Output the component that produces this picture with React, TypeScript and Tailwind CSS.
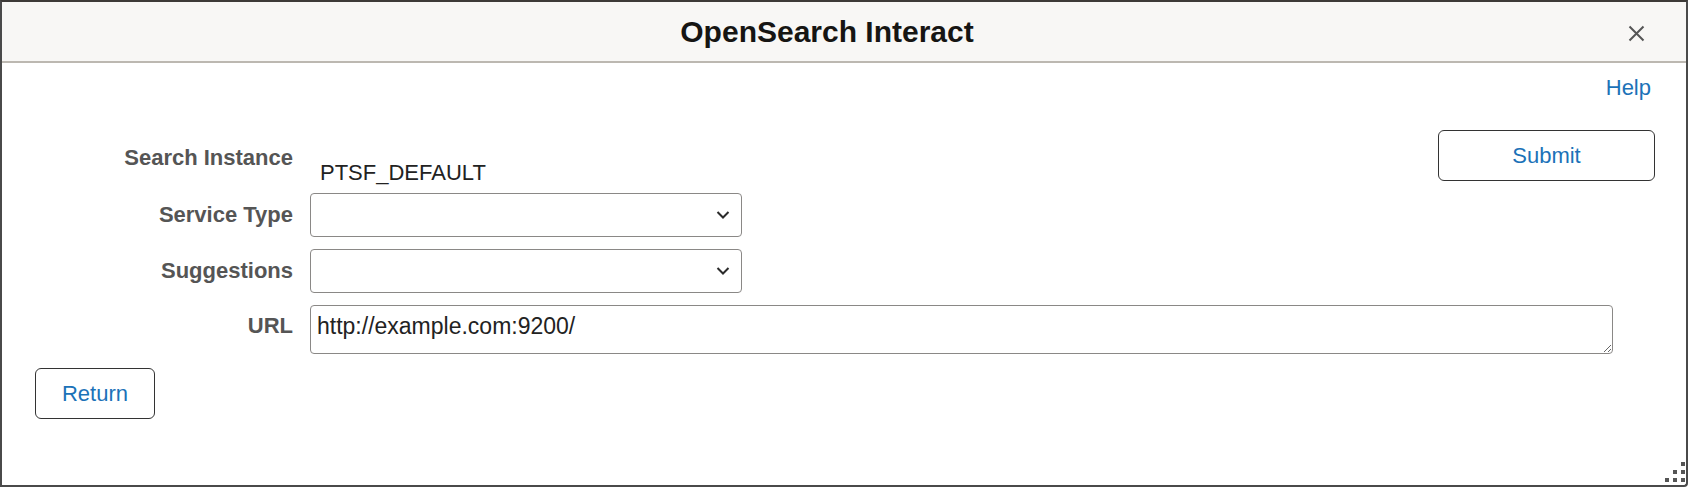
import React from 'react';

const Chevron = () => (
  <svg width="14" height="9" viewBox="0 0 14 9" className="pointer-events-none absolute right-[11px] top-1/2 -translate-y-1/2">
    <path d="M1.5 1.5 L7 7 L12.5 1.5" fill="none" stroke="#2b2b2b" strokeWidth="2" />
  </svg>
);

const SelectBox = () => (
  <div className="relative h-[44px] w-[432px] rounded-[4px] border border-[#8a8886] bg-white">
    <Chevron />
  </div>
);

const App = () => {
  const font = { fontFamily: '"Liberation Sans", Arial, sans-serif' };

  return (
    <div className="h-[487px] w-[1688px] bg-white" style={font}>
      <div className="relative flex h-[487px] flex-col overflow-hidden rounded-br-[4px] border-t-2 border-r-2 border-b-2 border-l-2 border-t-[#3d3a37] border-r-[#4a4a4a] border-b-[#4a4a4a] border-l-[#4a4a4a]">
        {/* Header */}
        <div className="relative flex h-[61px] shrink-0 items-center justify-center border-b-2 border-[#bcb8b1] bg-[#f8f7f5] pr-[34px]">
          <h1 className="text-[30px] font-bold leading-none text-[#161513]">OpenSearch Interact</h1>
          <button className="absolute right-[41px] top-[22px] flex h-[18px] w-[18px] items-center justify-center">
            <svg width="17" height="17" viewBox="0 0 17 17">
              <path d="M1.5 1.5 L15.5 15.5 M15.5 1.5 L1.5 15.5" stroke="#555555" strokeWidth="2" />
            </svg>
          </button>
        </div>

        {/* Body */}
        <div className="flex flex-1 flex-col">
          <div className="mt-[13px] flex justify-end pr-[35px]">
            <a className="text-[22px] leading-[24px] text-[#1b72b8]">Help</a>
          </div>

          <div className="mt-[30px] flex flex-col">
            {/* Search Instance */}
            <div className="flex h-[63px] items-start">
              <div className="w-[291px] pt-[16px] text-right text-[22px] font-bold leading-[24px] text-[#555555]">
                Search Instance
              </div>
              <div className="ml-[27px] flex-1 pt-[31px] text-[22px] leading-[24px] text-[#222222]">PTSF_DEFAULT</div>
              <button className="mr-[31px] h-[51px] w-[217px] rounded-[6px] border border-[#333333] bg-white text-[22px] text-[#1b72b8]">
                Submit
              </button>
            </div>

            {/* Service Type */}
            <div className="mb-[12px] flex items-center">
              <div className="w-[291px] text-right text-[22px] font-bold leading-[24px] text-[#555555]">Service Type</div>
              <div className="ml-[17px]">
                <SelectBox />
              </div>
            </div>

            {/* Suggestions */}
            <div className="mb-[12px] flex items-center">
              <div className="w-[291px] text-right text-[22px] font-bold leading-[24px] text-[#555555]">Suggestions</div>
              <div className="ml-[17px]">
                <SelectBox />
              </div>
            </div>

            {/* URL */}
            <div className="flex items-start">
              <div className="w-[291px] pt-[9px] text-right text-[22px] font-bold leading-[24px] text-[#555555]">URL</div>
              <textarea
                defaultValue="http://example.com:9200/"
                className="ml-[17px] block h-[49px] w-[1303px] rounded-[4px] border border-[#8a8886] px-[6px] pt-[8px] text-[23px] leading-[25px] text-[#222222] outline-none"
                style={font}
              />
            </div>

            <div className="mt-[14px] pl-[33px]">
              <button className="h-[51px] w-[120px] rounded-[6px] border border-[#333333] bg-white text-[22px] text-[#1b72b8]">
                Return
              </button>
            </div>
          </div>
        </div>

        {/* resize grip */}
        <div className="absolute bottom-[3px] right-[1px] grid grid-cols-3 gap-[4px]">
          <span className="h-[4px] w-[4px]" />
          <span className="h-[4px] w-[4px]" />
          <span className="h-[4px] w-[4px] bg-[#555555]" />
          <span className="h-[4px] w-[4px]" />
          <span className="h-[4px] w-[4px] bg-[#555555]" />
          <span className="h-[4px] w-[4px] bg-[#555555]" />
          <span className="h-[4px] w-[4px] bg-[#555555]" />
          <span className="h-[4px] w-[4px] bg-[#555555]" />
          <span className="h-[4px] w-[4px] bg-[#555555]" />
        </div>
      </div>
    </div>
  );
};

export default App;
